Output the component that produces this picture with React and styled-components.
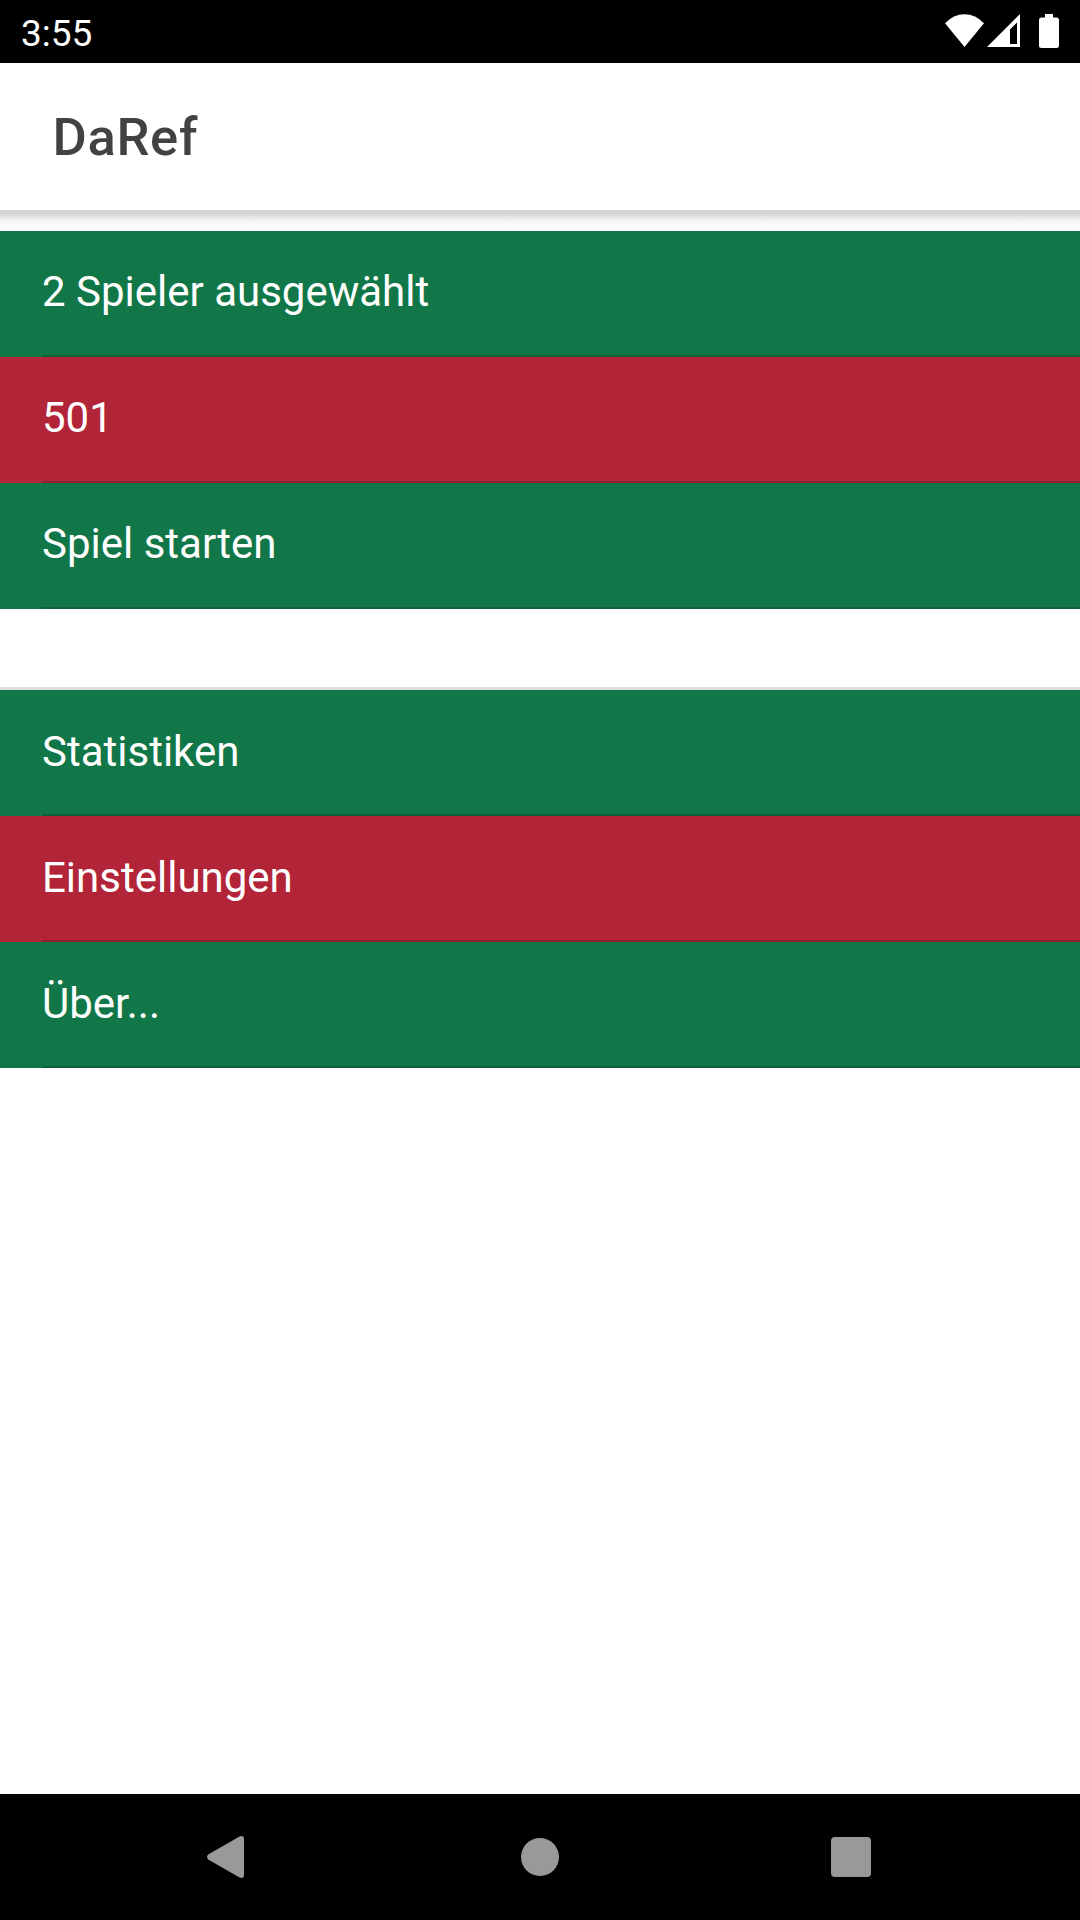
import React from 'react';
import styled, { createGlobalStyle } from 'styled-components';

const GlobalStyle = createGlobalStyle`
  * { box-sizing: border-box; }
  body {
    margin: 0;
    background: #fff;
    font-family: Roboto, "Noto Sans", sans-serif;
  }
`;

const Screen = styled.div`
  display: flex;
  flex-direction: column;
  width: 1080px;
  height: 1920px;
  background: #fff;
  overflow: hidden;
`;

const StatusBar = styled.div`
  display: flex;
  flex: none;
  justify-content: space-between;
  height: 63px;
  padding: 0 20px 0 21px;
  background: #000;
  color: #fff;
`;

const Clock = styled.span`
  padding-top: 12px;
  font-size: 37px;
  line-height: 44px;
`;

const StatusIcons = styled.svg`
  display: block;
  width: 120px;
  height: 63px;
  fill: #fff;
`;

const Header = styled.header`
  display: flex;
  flex: none;
  align-items: center;
  height: 147px;
  padding: 0 52.5px;
`;

const Title = styled.h1`
  margin: 0;
  color: #424242;
  font-size: 52.5px;
  font-weight: 500;
  line-height: 62px;
  letter-spacing: 0.66px;
`;

const HeaderShadow = styled.div`
  flex: none;
  height: 21px;
  background: linear-gradient(
    #d6d6d6 0px, #d6d6d6 2px, #d3d3d3 3px, #e0e0e0 6px, #eeeeee 9px, #f9f9f9 13px, #fefefe 17px, #fff 21px
  );
`;

const Content = styled.main`
  display: flex;
  flex: 1;
  flex-direction: column;
  gap: 78px;
`;

const List = styled.div`
  display: flex;
  flex-direction: column;
`;

const DividedList = styled(List)`
  border-top: 3px solid #dedede;
`;

const tones = { green: '#117748', red: '#b22438' };

const Row = styled.div`
  display: flex;
  height: 126px;
  padding-left: 42px;
  background: ${({ $tone }) => tones[$tone]};
`;

const RowLabel = styled.div`
  display: flex;
  flex: 1;
  align-items: center;
  padding-bottom: ${({ $lowered }) => ($lowered ? 0 : 2)}px;
  border-bottom: 2px solid rgba(20, 20, 20, 0.22);
  color: #fff;
  font-size: 42px;
  line-height: 50px;
`;

const NavBar = styled.nav`
  display: flex;
  flex: none;
  height: 126px;
  background: #000;
`;

const NavIcons = styled.svg`
  display: block;
  width: 1080px;
  height: 126px;
  fill: #999;
`;

const gameItems = [
  { label: '2 Spieler ausgewählt', tone: 'green' },
  { label: '501', tone: 'red' },
  { label: 'Spiel starten', tone: 'green' },
];

const appItems = [
  { label: 'Statistiken', tone: 'green' },
  { label: 'Einstellungen', tone: 'red' },
  { label: 'Über...', tone: 'green' },
];

const renderRows = (items, lowered) =>
  items.map(({ label, tone }) => (
    <Row key={label} $tone={tone}>
      <RowLabel $lowered={lowered}>{label}</RowLabel>
    </Row>
  ));

export default function App() {
  return (
    <Screen>
      <GlobalStyle />
      <StatusBar>
        <Clock>3:55</Clock>
        <StatusIcons viewBox="940 0 120 63">
          <path d="M945 23.3Q953.5 14.2 964.5 14.2T984 23.3L964.5 47Z" />
          <path fillRule="evenodd" d="M1020 14V47H987ZM1017 22.500L1010 29.500V44H1017Z" />
          <path d="M1045 14h8v3.500h3.500q2.500 0 2.500 2.500V45.500q0 2.500-2.500 2.500h-15q-2.500 0-2.500-2.500V20q0-2.500 2.500-2.500H1045z" />
        </StatusIcons>
      </StatusBar>
      <Header>
        <Title>DaRef</Title>
      </Header>
      <HeaderShadow />
      <Content>
        <List>{renderRows(gameItems, false)}</List>
        <DividedList>{renderRows(appItems, true)}</DividedList>
      </Content>
      <NavBar>
        <NavIcons viewBox="0 0 1080 126">
          <path d="M208.200 60.600L239.500 42.400Q244 40.800 244 45V81Q244 85.200 239.500 83.600L208.200 65.400Q205.800 63 208.200 60.600Z" />
          <circle cx="540" cy="63" r="19" />
          <rect x="831" y="43" width="40" height="40" rx="4" />
        </NavIcons>
      </NavBar>
    </Screen>
  );
}
